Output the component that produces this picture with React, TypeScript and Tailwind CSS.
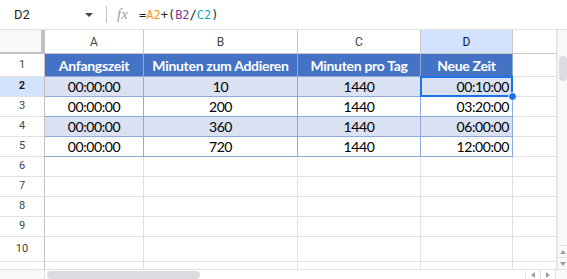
import React from 'react';

const widths = [45, 99, 154, 123, 92, 44];
const cols = ['A', 'B', 'C', 'D'];
const head = ['Anfangszeit', 'Minuten zum Addieren', 'Minuten pro Tag', 'Neue Zeit'];
const rows = [
  ['00:00:00', '10', '1440', '00:10:00'],
  ['00:00:00', '200', '1440', '03:20:00'],
  ['00:00:00', '360', '1440', '06:00:00'],
  ['00:00:00', '720', '1440', '12:00:00'],
];
const emptyHeights = [20, 20, 20, 20, 25];

const RowHead = ({ n, active }: { n: number | string; active?: boolean }) => (
  <div
    className={`w-[45px] shrink-0 flex items-center justify-center border-r border-b border-r-[#c0c0c0] border-b-[#e1e1e1] text-[11px] font-['Roboto',sans-serif] ${
      active ? 'bg-[#d3e3fd] font-bold text-[#1f1f1f]' : 'bg-white text-[#444746]'
    }`}
  >
    {n}
  </div>
);

const FormulaBar = () => (
  <div className="h-[30px] shrink-0 flex items-center border-b border-[#e1e1e1] bg-white font-['Roboto',sans-serif]">
    <div className="w-[106px] flex items-center pl-[14px] pr-[14px] justify-between">
      <span className="text-[13px] text-[#1f1f1f]">D2</span>
      <svg width="8" height="4" viewBox="0 0 8 4" className="mr-[-1px]">
        <path d="M0 0 L8 0 L4 4 Z" fill="#444746" />
      </svg>
    </div>
    <div className="w-px h-[17px] bg-[#c4c7c5]" />
    <span className="ml-[10px] inline-block w-[22px] text-[15px] italic text-[#9aa0a6] font-['Liberation_Serif',serif]">fx</span>
    <span className="text-[12px] font-['DejaVu_Sans_Mono',monospace] text-[#1f1f1f]">
      =<span className="text-[#f7981d]">A2</span>+(<span className="text-[#7e3794]">B2</span>/<span className="text-[#11a9cc]">C2</span>)
    </span>
  </div>
);

export default function App() {
  return (
    <div className="w-[567px] h-[279px] flex flex-col bg-white overflow-hidden">
      <FormulaBar />
      <div className="flex flex-1 min-h-0">
        <div className="w-[557px] flex flex-col">
          {/* column letters */}
          <div className="h-[24px] flex shrink-0">
            <div className="w-[45px] shrink-0 bg-[#f8f9fa] border-r-4 border-b-2 border-[#c0c0c0]" />
            {cols.map((c, i) => (
              <div
                key={c}
                style={{ width: widths[i + 1] }}
                className={`shrink-0 flex items-center justify-center border-r border-b border-[#c7c7c7] text-[12px] font-['Roboto',sans-serif] ${
                  c === 'D' ? 'bg-[#d3e3fd] text-[#041e49]' : 'bg-white text-[#444746]'
                }`}
              >
                {c}
              </div>
            ))}
            <div className="w-[44px] shrink-0 border-b border-[#c7c7c7] border-r border-r-[#e1e1e1]" />
          </div>

          {/* table header */}
          <div className="h-[23px] flex shrink-0">
            <RowHead n={1} />
            {head.map((h, i) => (
              <div
                key={h}
                style={{ width: widths[i + 1] }}
                className="shrink-0 flex items-center justify-center bg-[#4472c4] border-r border-b border-[#8eaadb] text-white font-bold text-[14px] tracking-[-0.3px] font-['Lato',sans-serif]"
              >
                {h}
              </div>
            ))}
            <div className="w-[44px] shrink-0 border-r border-b border-[#e1e1e1]" />
          </div>

          {rows.map((r, ri) => (
            <div key={ri} className="h-[20px] flex shrink-0">
              <RowHead n={ri + 2} active={ri === 0} />
              {r.map((v, ci) => (
                <div
                  key={ci}
                  style={{ width: widths[ci + 1] }}
                  className={`relative shrink-0 flex items-center border-r border-b border-[#8eaadb] text-[14px] tracking-[-0.4px] text-black font-['Lato',sans-serif] ${
                    ri % 2 === 0 ? 'bg-[#d9e1f2]' : 'bg-white'
                  } ${ci === 3 ? 'justify-end pr-[3px]' : 'justify-center'}`}
                >
                  {v}
                  {ri === 0 && ci === 3 && (
                    <>
                      <div className="absolute z-10 left-[-1px] top-[-1px] right-[-1px] bottom-[-1px] border-2 border-[#1a73e8]" />
                      <div className="absolute z-20 right-[-5px] bottom-[-5px] w-[9px] h-[9px] rounded-full bg-[#1a73e8] border border-white" />
                    </>
                  )}
                </div>
              ))}
              <div className="w-[44px] shrink-0 border-r border-b border-[#e1e1e1]" />
            </div>
          ))}

          {emptyHeights.map((h, i) => (
            <div key={i} style={{ height: h }} className="flex shrink-0">
              <RowHead n={i + 6} />
              {widths.slice(1).map((w, ci) => (
                <div key={ci} style={{ width: w }} className="shrink-0 border-r border-b border-[#e1e1e1]" />
              ))}
            </div>
          ))}

          <div className="flex flex-1">
            <div className="w-[45px] shrink-0 border-r border-[#c0c0c0]" />
            {widths.slice(1).map((w, ci) => (
              <div key={ci} style={{ width: w }} className="shrink-0 border-r border-[#e1e1e1]" />
            ))}
          </div>
        </div>

        {/* vertical scrollbar */}
        <div className="w-[10px] flex flex-col bg-[#f8f9fa] border-l border-[#ececec]">
          <div className="h-[24px] shrink-0" />
          <div className="mt-[2px] ml-[1px] w-[8px] h-[25px] rounded-full bg-[#dadce0]" />
          <div className="flex-1" />
          <div className="h-[12px] flex items-center justify-center border-t border-[#e1e1e1]">
            <svg width="6" height="4" viewBox="0 0 6 4"><path d="M0 4 L6 4 L3 0 Z" fill="#9aa0a6" /></svg>
          </div>
          <div className="h-[12px] flex items-center justify-center border-t border-[#e1e1e1]">
            <svg width="6" height="4" viewBox="0 0 6 4"><path d="M0 0 L6 0 L3 4 Z" fill="#9aa0a6" /></svg>
          </div>
        </div>
      </div>

      {/* horizontal scrollbar */}
      <div className="h-[10px] shrink-0 flex items-center bg-white border-t border-[#e1e1e1]">
        <div className="w-[45px] h-full bg-[#f8f9fa] border-r border-[#e1e1e1]" />
        <div className="ml-[2px] w-[153px] h-[8px] rounded-full bg-[#dadce0]" />
        <div className="flex-1" />
        <div className="w-[15px] h-full flex items-center justify-center border-l border-[#e1e1e1]">
          <svg width="4" height="6" viewBox="0 0 4 6"><path d="M4 0 L4 6 L0 3 Z" fill="#9aa0a6" /></svg>
        </div>
        <div className="w-[15px] h-full flex items-center justify-center border-l border-[#e1e1e1]">
          <svg width="4" height="6" viewBox="0 0 4 6"><path d="M0 0 L0 6 L4 3 Z" fill="#9aa0a6" /></svg>
        </div>
        <div className="w-[12px] h-full bg-[#f8f9fa] border-l border-[#e1e1e1]" />
      </div>
    </div>
  );
}
